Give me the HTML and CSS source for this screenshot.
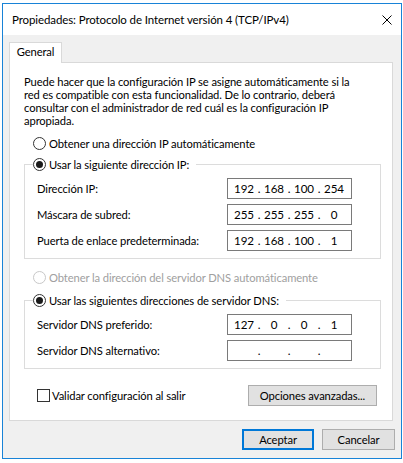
FILE: index.html
```html
<!DOCTYPE html>
<html lang="es">
<head>
<meta charset="utf-8">
<title>Propiedades: Protocolo de Internet versión 4 (TCP/IPv4)</title>
<link rel="stylesheet" href="styles.css">
</head>
<body>
<div class="screen">
  <div class="window">
    <div class="titlebar">
      <span class="title">Propiedades: Protocolo de Internet versión 4 (TCP/IPv4)</span>
      <svg class="close" width="10" height="10" viewBox="0 0 10 10"><path d="M0.5 0.5 L9.5 9.5 M9.5 0.5 L0.5 9.5" stroke="#000" stroke-width="1" fill="none"/></svg>
    </div>
    <div class="client">
      <div class="tabs"><div class="tab">General</div></div>
      <div class="panel">
        <p class="intro">Puede hacer que la configuración IP se asigne automáticamente si la<br>red es compatible con esta funcionalidad. De lo contrario, deberá<br>consultar con el administrador de red cuál es la configuración IP<br>apropiada.</p>

        <div class="opt opt-first"><span class="radio"></span><span class="opt-text">Obtener una dirección IP automáticamente</span></div>

        <fieldset class="group">
          <legend class="opt"><span class="radio checked"></span><span class="opt-text">Usar la siguiente dirección IP:</span></legend>
          <div class="row"><span class="label">Dirección IP:</span><span class="ip"><span class="oct">192</span><span class="dot">.</span><span class="oct">168</span><span class="dot">.</span><span class="oct">100</span><span class="dot">.</span><span class="oct">254</span></span></div>
          <div class="row"><span class="label">Máscara de subred:</span><span class="ip"><span class="oct">255</span><span class="dot">.</span><span class="oct">255</span><span class="dot">.</span><span class="oct">255</span><span class="dot">.</span><span class="oct">0</span></span></div>
          <div class="row"><span class="label">Puerta de enlace predeterminada:</span><span class="ip"><span class="oct">192</span><span class="dot">.</span><span class="oct">168</span><span class="dot">.</span><span class="oct">100</span><span class="dot">.</span><span class="oct">1</span></span></div>
        </fieldset>

        <div class="opt opt-dns disabled"><span class="radio"></span><span class="opt-text">Obtener la dirección del servidor DNS automáticamente</span></div>

        <fieldset class="group group-dns">
          <legend class="opt"><span class="radio checked"></span><span class="opt-text">Usar las siguientes direcciones de servidor DNS:</span></legend>
          <div class="row"><span class="label">Servidor DNS preferido:</span><span class="ip"><span class="oct">127</span><span class="dot">.</span><span class="oct">0</span><span class="dot">.</span><span class="oct">0</span><span class="dot">.</span><span class="oct">1</span></span></div>
          <div class="row"><span class="label">Servidor DNS alternativo:</span><span class="ip"><span class="oct"></span><span class="dot">.</span><span class="oct"></span><span class="dot">.</span><span class="oct"></span><span class="dot">.</span><span class="oct"></span></span></div>
        </fieldset>

        <div class="footer">
          <span class="check"></span><span class="check-text">Validar configuración al salir</span>
          <span class="btn btn-adv">Opciones avanzadas...</span>
        </div>
      </div>
      <div class="actions">
        <span class="btn btn-ok">Aceptar</span>
        <span class="btn btn-cancel">Cancelar</span>
      </div>
    </div>
  </div>
</div>
</body>
</html>
```

FILE: styles.css
```css
* { box-sizing: border-box; }
html, body { margin: 0; padding: 0; }
body {
  width: 403px;
  height: 463px;
  overflow: hidden;
  background: #ffffff;
  font-family: Lato, "Liberation Sans", sans-serif;
  font-size: 11.2px;
  letter-spacing: -0.1px;
  color: #000;
}
.screen { padding: 3px 0 0 2px; }
.window {
  width: 400px;
  height: 456px;
  border: 1px solid #1883d7;
  background: #f0f0f0;
  display: flex;
  flex-direction: column;
}
.titlebar {
  height: 31px;
  flex: none;
  background: #fff;
  display: flex;
  align-items: center;
  padding: 0 9px 0 9px;
}
.title { flex: 1; white-space: nowrap; font-size: 11.5px; }
.close { display: block; flex: none; }

.client {
  flex: 1;
  display: flex;
  flex-direction: column;
  padding: 7px 6px 0 6px;
}
.tabs { display: flex; }
.tab {
  position: relative;
  z-index: 1;
  width: 53px;
  height: 21px;
  margin-bottom: -1px;
  border: 1px solid #d9d9d9;
  border-bottom: none;
  background: #fff;
  text-align: center;
  line-height: 18px;
}
.panel {
  width: 384px;
  height: 359px;
  border: 1px solid #d9d9d9;
  background: #fff;
  display: flex;
  flex-direction: column;
}
.intro {
  margin: 12px 0 0 14px;
  line-height: 13px;
  white-space: nowrap;
}

.opt {
  display: flex;
  align-items: center;
  height: 13px;
  gap: 3px;
  white-space: nowrap;
}
.opt-first { margin: 10px 0 0 23px; }
.opt-dns { margin: 12px 0 0 23px; }
.radio {
  flex: none;
  width: 13px;
  height: 13px;
  border: 1px solid #333;
  border-radius: 50%;
  background: #fff;
  display: flex;
  align-items: center;
  justify-content: center;
}
.radio.checked::after {
  content: "";
  width: 7px;
  height: 7px;
  border-radius: 50%;
  background: #1a1a1a;
}
.disabled { color: #a0a0a0; }
.disabled .radio { border-color: #c8c8c8; }

.group {
  margin: 8px 11px 0 14px;
  padding: 7px 0 7px 0;
  border: 1px solid #dcdcdc;
  min-width: 0;
}
.group-dns { margin-top: 10px; }
.group legend {
  margin-left: 8px;
  padding: 0 7px 0 0;
}
.row {
  display: flex;
  align-items: center;
  height: 21px;
  margin-left: 12px;
}
.row + .row { margin-top: 5px; }
.label { width: 190px; flex: none; white-space: nowrap; }
.ip {
  flex: none;
  width: 125px;
  height: 21px;
  border: 1px solid #7a7a7a;
  background: #fff;
  display: flex;
  align-items: center;
  padding-left: 3px;
  font-size: 11.6px;
}
.oct { width: 26px; text-align: center; }
.dot { width: 4px; text-align: center; }

.footer {
  margin: auto 15px 14px 27px;
  display: flex;
  align-items: center;
  height: 21px;
}
.check {
  flex: none;
  width: 13px;
  height: 13px;
  border: 1px solid #333;
  background: #fff;
  margin-right: 2px;
}
.check-text { white-space: nowrap; }
.btn {
  height: 21px;
  border: 1px solid #adadad;
  background: #e1e1e1;
  display: flex;
  align-items: center;
  justify-content: center;
  white-space: nowrap;
}
.btn-adv { margin-left: auto; width: 129px; }
.actions {
  display: flex;
  justify-content: flex-end;
  gap: 8px;
  margin-top: 8px;
}
.btn-ok { width: 72px; border: 2px solid #0078d7; }
.btn-cancel { width: 73px; }
```
